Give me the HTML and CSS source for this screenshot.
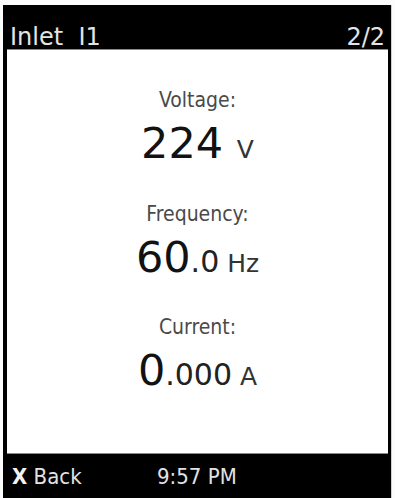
FILE: index.html
```html
<!DOCTYPE html>
<html>
<head>
<meta charset="utf-8">
<link rel="stylesheet" href="styles.css">
</head>
<body>
<div class="device">
  <div class="header">
    <span class="title">Inlet  I1</span>
    <span class="page">2/2</span>
  </div>
  <div class="screen">
    <div class="reading">
      <div class="label">Voltage:</div>
      <div class="value"><span class="big">224 </span><span class="unit">V</span></div>
    </div>
    <div class="reading">
      <div class="label">Frequency:</div>
      <div class="value"><span class="big">60</span><span class="mid">.0</span><span class="unit"> Hz</span></div>
    </div>
    <div class="reading">
      <div class="label">Current:</div>
      <div class="value"><span class="big">0</span><span class="mid">.000</span><span class="unit"> A</span></div>
    </div>
  </div>
  <div class="footer">
    <span class="back"><b class="x">X</b> Back</span>
    <span class="time">9:57 PM</span>
  </div>
</div>
</body>
</html>
```

FILE: styles.css
```css
html, body {
  margin: 0;
  padding: 0;
  background: #fcfcfc;
}

.device {
  margin: 5px 0 0 3px;
  width: 388px;
  box-sizing: border-box;
  padding: 0 3px 0 4px;
  background: #000;
  box-shadow: 1px 0 0 #cfcfcf;
}

.header {
  height: 44px;
  box-sizing: border-box;
  padding: 19.7px 3px 0 3px;
  display: flex;
  justify-content: space-between;
  font-family: "DejaVu Sans", sans-serif;
  font-size: 24px;
  line-height: 24px;
  color: #e4e4e4;
}

.title {
  white-space: pre;
}

.screen {
  height: 405px;
  box-sizing: border-box;
  background: #fff;
  border-top: 1px solid #8a8a8a;
  border-bottom: 1px solid #8a8a8a;
  padding-top: 38.2px;
  display: flex;
  flex-direction: column;
  gap: 37.3px;
  text-align: center;
}

.reading {
  display: flex;
  flex-direction: column;
  gap: 10.2px;
}

.label {
  font-family: "DejaVu Sans Condensed", "Liberation Sans", sans-serif;
  font-size: 21px;
  line-height: 24px;
  color: #4a4a4a;
}

.value {
  font-family: "DejaVu Sans", sans-serif;
  font-size: 43px;
  line-height: 42px;
  height: 42px;
  color: #121212;
  white-space: pre;
}

.mid {
  font-size: 30px;
  line-height: 1;
  color: #222;
}

.unit {
  font-size: 25px;
  line-height: 1;
  color: #333;
}

.footer {
  height: 44px;
  box-sizing: border-box;
  padding: 10.4px 0 0 5px;
  display: flex;
  font-family: "DejaVu Sans Condensed", "Liberation Sans", sans-serif;
  font-size: 22px;
  line-height: 26px;
  color: #e2e2e2;
}

.back {
  width: 145px;
}

.x {
  font-weight: bold;
  color: #f2f2f2;
}
```
